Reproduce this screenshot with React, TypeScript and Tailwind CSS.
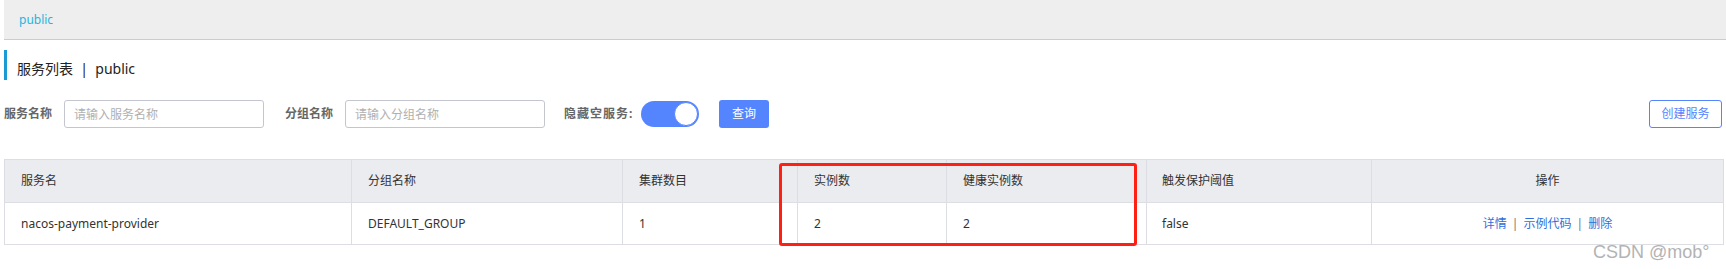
import React from "react";

const font = "font-['Noto_Sans','Noto_Sans_CJK_SC',sans-serif]";

type Row = {
  name: string;
  group: string;
  clusters: string;
  instances: string;
  healthy: string;
  threshold: string;
};

const rows: Row[] = [
  {
    name: "nacos-payment-provider",
    group: "DEFAULT_GROUP",
    clusters: "1",
    instances: "2",
    healthy: "2",
    threshold: "false",
  },
];

function Field({ label, placeholder }: { label: string; placeholder: string }) {
  return (
    <div className="flex items-center">
      <span className="text-[12px] font-bold text-[#666666] w-[49px] whitespace-nowrap">{label}</span>
      <input
        placeholder={placeholder}
        className="ml-[11px] w-[200px] h-[28px] rounded-[3px] border border-[#c4c6cf] px-[9px] text-[12px] text-[#333] placeholder:text-[#b0b0b0] outline-none"
      />
    </div>
  );
}

export default function App() {
  return (
    <div className={`relative w-[1726px] h-[269px] bg-white overflow-hidden ${font}`}>
      {/* breadcrumb */}
      <div className="ml-[4px] h-[40px] bg-[#eeeeee] border-b border-[#cccccc] flex items-center pl-[15px]">
        <span className="text-[12px] text-[#1fb5de]">public</span>
      </div>

      {/* title */}
      <div className="ml-[4px] mt-[10px] h-[30px] border-l-[3px] border-[#1b9ad6] pl-[10px] flex items-end pb-[1px]">
        <span className="text-[14px] leading-[20px] text-[#222]">服务列表&nbsp;&nbsp;|&nbsp;&nbsp;public</span>
      </div>

      {/* filters */}
      <div className="mt-[20px] ml-[4px] mr-[4px] flex items-center h-[28px]">
        <Field label="服务名称" placeholder="请输入服务名称" />
        <div className="ml-[21px]">
          <Field label="分组名称" placeholder="请输入分组名称" />
        </div>
        <span className="ml-[19px] w-[71px] text-[12px] font-bold text-[#666666] whitespace-nowrap tracking-[1px]">隐藏空服务:</span>
        <button className="ml-[6px] w-[58px] h-[26px] rounded-full bg-[#5584ff] flex items-center justify-end p-[1px]">
          <span className="w-[24px] h-[24px] rounded-full bg-white border border-[#5584ff]" />
        </button>
        <button className="ml-[20px] w-[50px] h-[28px] rounded-[3px] bg-[#5584ff] text-white text-[12px]">查询</button>
        <button className="ml-auto w-[73px] h-[28px] rounded-[3px] border border-[#5584ff] bg-white text-[#5584ff] text-[12px]">
          创建服务
        </button>
      </div>

      {/* table */}
      <table className="mt-[31px] ml-[4px] w-[1719px] border-collapse table-fixed text-[12px] text-[#333]">
        <colgroup>
          <col className="w-[347px]" />
          <col className="w-[271px]" />
          <col className="w-[175px]" />
          <col className="w-[149px]" />
          <col className="w-[200px]" />
          <col className="w-[225px]" />
          <col className="w-[352px]" />
        </colgroup>
        <thead>
          <tr className="bg-[#ebecf0] h-[43px]">
            <th className="border border-[#dcdee3] text-left font-normal pl-[16px]">服务名</th>
            <th className="border border-[#dcdee3] text-left font-normal pl-[16px]">分组名称</th>
            <th className="border border-[#dcdee3] text-left font-normal pl-[16px]">集群数目</th>
            <th className="border border-[#dcdee3] text-left font-normal pl-[16px]">实例数</th>
            <th className="border border-[#dcdee3] text-left font-normal pl-[16px]">健康实例数</th>
            <th className="border border-[#dcdee3] text-left font-normal pl-[15px]">触发保护阈值</th>
            <th className="border border-[#dcdee3] text-center font-normal">操作</th>
          </tr>
        </thead>
        <tbody>
          {rows.map((r) => (
            <tr key={r.name} className="h-[42px]">
              <td className="border border-[#dcdee3] pl-[16px]">{r.name}</td>
              <td className="border border-[#dcdee3] pl-[16px]">{r.group}</td>
              <td className="border border-[#dcdee3] pl-[16px]">{r.clusters}</td>
              <td className="border border-[#dcdee3] pl-[16px]">{r.instances}</td>
              <td className="border border-[#dcdee3] pl-[16px]">{r.healthy}</td>
              <td className="border border-[#dcdee3] pl-[15px]">{r.threshold}</td>
              <td className="border border-[#dcdee3] text-center">
                <a className="text-[#2e6fd9]">详情</a>
                <span className="mx-[5px] text-[#777]">|</span>
                <a className="text-[#2e6fd9]">示例代码</a>
                <span className="mx-[5px] text-[#777]">|</span>
                <a className="text-[#2e6fd9]">删除</a>
              </td>
            </tr>
          ))}
        </tbody>
      </table>

      {/* red highlight annotation */}
      <div className="absolute left-[779px] top-[163px] w-[358px] h-[83px] border-[3px] border-[#ff2015] rounded-[3px] pointer-events-none" />

      {/* watermark */}
      <span className="absolute left-[1593px] top-[240px] text-[18px] leading-[24px] text-[#b3b3b3] font-['Liberation_Sans',sans-serif]">
        CSDN @mob°
      </span>
    </div>
  );
}
